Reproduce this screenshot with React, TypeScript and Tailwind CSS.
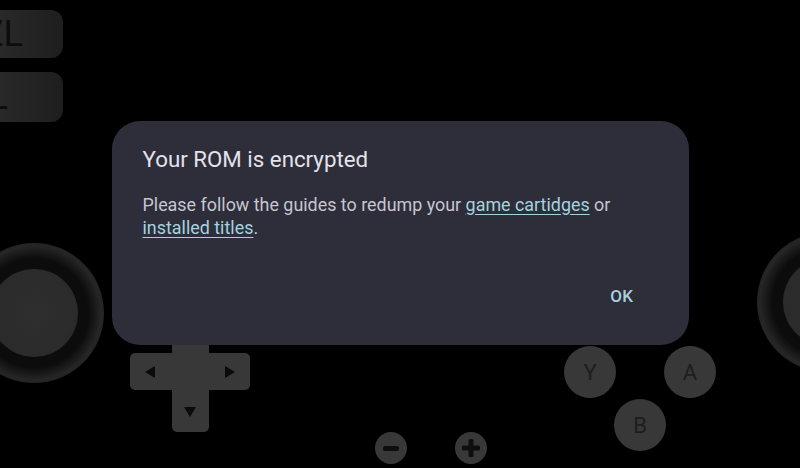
import React from "react";

function Tri({ dir }: { dir: "l" | "r" | "d" }) {
  const pts = dir === "l" ? "10,0 10,12 0,6" : dir === "r" ? "0,0 0,12 10,6" : "0,0 12,0 6,10";
  return (
    <svg width={dir === "d" ? 12 : 10} height={dir === "d" ? 10 : 12} viewBox={dir === "d" ? "0 0 12 10" : "0 0 10 12"}>
      <polygon points={pts} fill="#0b0b0b" />
    </svg>
  );
}

export default function App() {
  return (
    <div
      className="relative w-[800px] h-[468px] overflow-hidden bg-black"
      style={{ fontFamily: "Roboto, 'Noto Sans', sans-serif" }}
    >
      {/* Shoulder buttons */}
      <div className="absolute left-[-40px] top-[10px] w-[103px] h-[48px] rounded-[12px] bg-gradient-to-r from-[#303030] to-[#1e1e1e] flex items-center justify-end pr-[40px]">
        <span className="text-[#0c0c0c] text-[36px] leading-none">ZL</span>
      </div>
      <div className="absolute left-[-40px] top-[72px] w-[103px] h-[50px] rounded-[12px] bg-gradient-to-r from-[#303030] to-[#1e1e1e] flex items-center justify-end pr-[55px]">
        <span className="text-[#0c0c0c] text-[36px] leading-none">L</span>
      </div>

      {/* Left joystick */}
      <div
        className="absolute left-[-36px] top-[243px] w-[140px] h-[140px] rounded-full flex items-center justify-center"
        style={{ background: "radial-gradient(circle, #0c0c0c 55%, #262626 68%, #191919 80%, #0e0e0e 100%)" }}
      >
        <div
          className="w-[88px] h-[88px] rounded-full"
          style={{ background: "radial-gradient(circle at 50% 50%, #2e2e2e 0%, #2b2b2b 70%, #3c3c3c 88%, #1f1f1f 100%)" }}
        />
      </div>

      {/* Right joystick */}
      <div
        className="absolute left-[757px] top-[232px] w-[140px] h-[140px] rounded-full flex items-center justify-center"
        style={{ background: "radial-gradient(circle, #0c0c0c 55%, #262626 68%, #191919 80%, #0e0e0e 100%)" }}
      >
        <div
          className="w-[88px] h-[88px] rounded-full"
          style={{ background: "radial-gradient(circle at 50% 50%, #2e2e2e 0%, #2b2b2b 70%, #3c3c3c 88%, #1f1f1f 100%)" }}
        />
      </div>

      {/* D-pad */}
      <div className="absolute left-[172px] top-[300px] w-[37px] h-[132px] rounded-[5px] bg-[#383838]" />
      <div className="absolute left-[130px] top-[353px] w-[120px] h-[37px] rounded-[5px] bg-[#383838] flex items-center justify-between px-[15px]">
        <Tri dir="l" />
        <Tri dir="r" />
      </div>
      <div className="absolute left-[184px] top-[407px]">
        <Tri dir="d" />
      </div>

      {/* Face buttons */}
      {[
        { l: "X", x: 640, y: 312 },
        { l: "Y", x: 590, y: 372 },
        { l: "A", x: 690, y: 372 },
        { l: "B", x: 640, y: 425 },
      ].map((b) => (
        <div
          key={b.l}
          className="absolute w-[52px] h-[52px] rounded-full bg-[#383838] flex items-center justify-center text-[#1e1e1e] text-[22px]"
          style={{ left: b.x - 26, top: b.y - 26 }}
        >
          {b.l}
        </div>
      ))}

      {/* Minus / Plus */}
      <div className="absolute left-[375px] top-[432px] w-[32px] h-[32px] rounded-full bg-[#383838] flex items-center justify-center">
        <div className="w-[16px] h-[5px] rounded-[2px] bg-[#0e0e0e]" />
      </div>
      <div className="absolute left-[455px] top-[432px] w-[32px] h-[32px] rounded-full bg-[#383838] flex items-center justify-center">
        <svg width="18" height="18" viewBox="0 0 18 18">
          <rect x="6.5" y="0" width="5" height="18" rx="1.5" fill="#0e0e0e" />
          <rect x="0" y="6.5" width="18" height="5" rx="1.5" fill="#0e0e0e" />
        </svg>
      </div>

      {/* Dialog */}
      <div className="absolute inset-0 flex items-center justify-center">
        <div className="w-[577px] h-[224px] mt-[-3px] rounded-[28px] bg-[#2d2e3a] pl-[31px] pr-[24px] pt-[24px] flex flex-col">
          <div className="text-[22.3px] leading-[28px] text-[#e4e2ea]">Your ROM is encrypted</div>
          <div className="mt-[20px] text-[17.9px] leading-[23px] text-[#c6c5d0]">
            Please follow the guides to redump your{" "}
            <span className="text-[#a6d2df] underline underline-offset-[3px]">game cartidges</span> or
            <br />
            <span className="text-[#a6d2df] underline underline-offset-[3px]">installed titles</span>.
          </div>
          <div className="flex justify-end mt-[45px] pr-[31px]">
            <span className="text-[17px] font-medium text-[#a9d0dd] tracking-wide">OK</span>
          </div>
        </div>
      </div>
    </div>
  );
}
